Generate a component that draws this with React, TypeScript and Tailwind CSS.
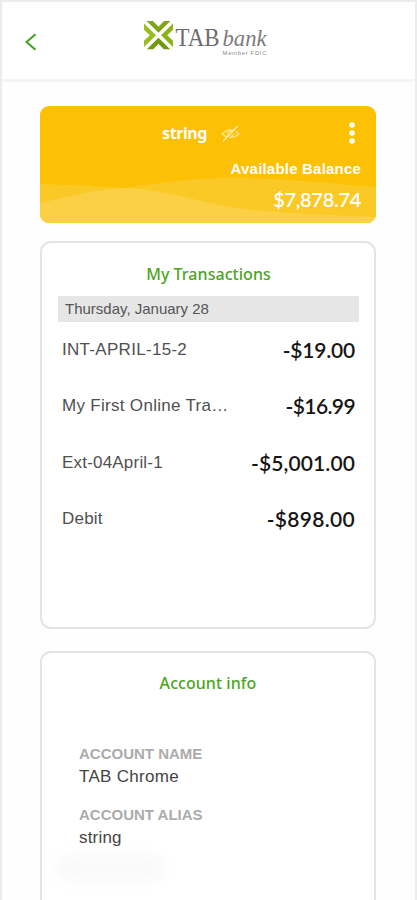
import React from 'react';

interface Transaction {
  name: string;
  amount: string;
  nameClass: string;
  amountClass: string;
}

const TRANSACTIONS: Transaction[] = [
  { name: 'INT-APRIL-15-2', amount: '-$19.00', nameClass: 'tracking-[0.3px]', amountClass: 'tracking-[-0.2px]' },
  { name: 'My First Online Tra…', amount: '-$16.99', nameClass: 'tracking-[0.3px]', amountClass: 'tracking-[-0.6px]' },
  { name: 'Ext-04April-1', amount: '-$5,001.00', nameClass: 'tracking-[0.2px]', amountClass: 'tracking-[0.1px]' },
  { name: 'Debit', amount: '-$898.00', nameClass: 'tracking-[0.2px]', amountClass: 'tracking-[0.3px]' },
];

const ACCOUNT_FIELDS = [
  { label: 'ACCOUNT NAME', value: 'TAB Chrome', valueClass: 'tracking-[0.3px]' },
  { label: 'ACCOUNT ALIAS', value: 'string', valueClass: 'tracking-[0.2px]' },
];

const Logo: React.FC = () => (
  <svg width="124" height="38" viewBox="0 0 124 38" role="img" aria-label="TAB bank">
    {/* Mark: four chevrons pointing inwards around a white cross */}
    <svg width="29" height="28.5" viewBox="0 0 29 29" preserveAspectRatio="none">
      <path d="M2.6 0 H9 L14.5 5.8 L20 0 H26.4 L14.5 12 Z" fill="#7ea616" />
      <path d="M2.6 29 H9 L14.5 23.2 L20 29 H26.4 L14.5 17 Z" fill="#6f9a10" />
      <path d="M0 2.6 V9 L5.8 14.5 L0 20 V26.4 L12 14.5 Z" fill="#98bd1c" />
      <path d="M29 2.6 V9 L23.2 14.5 L29 20 V26.4 L17 14.5 Z" fill="#8db314" />
    </svg>
    <text x="31.5" y="25" fontSize="25.5" fill="#6c6c72" textLength="44" lengthAdjust="spacingAndGlyphs" className="font-['Liberation_Serif',serif]">TAB</text>
    <text x="78.5" y="25" fontSize="24" fill="#7b7b80" textLength="44" lengthAdjust="spacingAndGlyphs" className="font-['Liberation_Serif',serif] italic">bank</text>
    <text x="78.5" y="34" fontSize="6" fill="#8a8a8a" textLength="44" className="font-['Liberation_Sans',sans-serif]">Member FDIC</text>
  </svg>
);

const BalanceCard: React.FC = () => (
  <section className="relative h-[117px] overflow-hidden rounded-[9px] bg-[#fcc004] text-white">
    <svg className="absolute inset-0" width="336" height="118" viewBox="0 0 336 118" preserveAspectRatio="none">
      <path d="M0 78 Q45 79 85 82 C130 76 160 71 205 72 C255 73 295 78 336 81 V118 H0 Z" fill="#fbc926" />
      <path d="M0 97 C28 91 55 83 85 82 C125 84 150 93 185 100 C225 107 280 109 336 111 V118 H0 Z" fill="#fcd045" />
    </svg>
    <div className="relative flex flex-col pl-[122px] pr-[15px] pt-[15px]">
      <div className="flex h-6 items-center">
        <span className="font-['Noto_Sans',sans-serif] text-base font-bold tracking-[-0.4px]">string</span>
        <svg className="ml-[14px]" width="19" height="17" viewBox="0 0 20 18" fill="none" stroke="#ffe690" strokeWidth="1.3" strokeLinecap="round">
          <path d="M1 9.5 Q10 1 19 9.5 Q10 17 1 9.5 Z" />
          <circle cx="10" cy="9.3" r="2.7" />
          <path d="M4.3 17 L18.8 2" stroke="#fcc004" />
          <path d="M2.5 16.8 L17.5 1.2" stroke="#fff3c4" />
        </svg>
        <svg className="ml-auto mr-[6px]" width="6" height="24" viewBox="0 0 6 24" fill="#fff">
          <circle cx="3" cy="4" r="2.8" />
          <circle cx="3" cy="12" r="2.8" />
          <circle cx="3" cy="20" r="2.8" />
        </svg>
      </div>
      <div className="mt-[14px] text-right text-[15px] font-bold leading-5 tracking-[0.2px]">Available Balance</div>
      <div className="mt-[8px] text-right font-[Lato,sans-serif] text-[20px] font-semibold leading-6 tracking-[-0.3px]">$7,878.74</div>
    </div>
  </section>
);

const CardTitle: React.FC<{ children: React.ReactNode }> = ({ children }) => (
  <h2 className="text-center font-['Noto_Sans',sans-serif] text-base font-medium leading-6 tracking-[0.05px] text-[#4ba51d]">{children}</h2>
);

const TransactionsCard: React.FC = () => (
  <section className="mt-[18px] h-[388px] rounded-[11px] border-2 border-[#e4e4e4] bg-white pl-4 pr-[15px] pt-[19px]">
    <CardTitle>My Transactions</CardTitle>
    <div className="mt-[10px] h-[26px] bg-[#e6e6e6] pl-[7px] text-[15px] leading-[26px] text-[#555]">Thursday, January 28</div>
    <ul className="-mt-px px-1">
      {TRANSACTIONS.map((tx) => (
        <li key={tx.name} className="flex h-[56.5px] items-center justify-between">
          <span className={`whitespace-nowrap text-[17px] text-[#505050] ${tx.nameClass}`}>{tx.name}</span>
          <span className={`font-[Lato,sans-serif] text-[21px] font-semibold text-[#161616] ${tx.amountClass}`}>{tx.amount}</span>
        </li>
      ))}
    </ul>
  </section>
);

const AccountInfoCard: React.FC = () => (
  <section className="mt-[22px] h-[290px] rounded-t-[11px] border-2 border-b-0 border-[#e4e4e4] bg-white pt-[18px]">
    <CardTitle>Account info</CardTitle>
    <dl className="mt-[48px] pl-[37px]">
      {ACCOUNT_FIELDS.map((field) => (
        <div key={field.label} className="mb-[15px]">
          <dt className="text-[15px] font-bold leading-[22px] text-[#ababab]">{field.label}</dt>
          <dd className={`text-[17px] leading-6 text-[#444] ${field.valueClass}`}>{field.value}</dd>
        </div>
      ))}
    </dl>
    <div className="-mt-[11px] ml-3 h-7 w-28 rounded-full bg-[#f7f7f7] opacity-60 blur-[6px]" />
  </section>
);

export default function App() {
  return (
    <div className="h-[900px] w-[417px] overflow-hidden border-x-2 border-t-2 border-[#ececec] bg-[#fefefe] font-['Liberation_Sans',sans-serif]">
      <header className="flex h-[78px] items-start border-b border-[#f5f5f5] bg-white shadow-[0_1px_3px_rgba(0,0,0,0.07)]">
        <svg className="ml-[23px] mt-[31px]" width="12" height="18" viewBox="0 0 12 18" fill="none" stroke="#3fa51e" strokeWidth="2.1">
          <path d="M10.5 1.2 L1.5 9 L10.5 16.8" />
        </svg>
        <div className="ml-[107px] mt-[19px]">
          <Logo />
        </div>
      </header>
      <main className="pl-[38px] pr-[39px] pt-[26px]">
        <BalanceCard />
        <TransactionsCard />
        <AccountInfoCard />
      </main>
    </div>
  );
}
